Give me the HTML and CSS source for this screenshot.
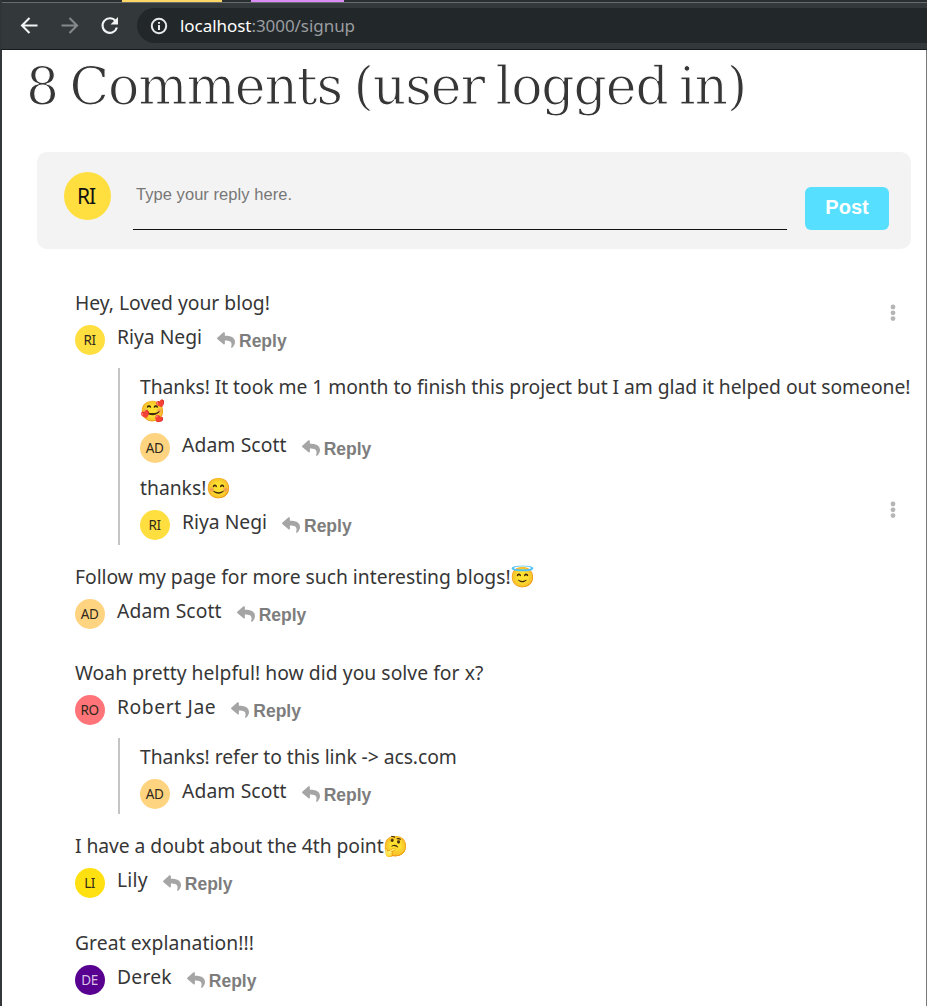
FILE: index.html
```html
<!DOCTYPE html>
<html lang="en">
<head>
<meta charset="utf-8">
<title>Comments</title>
<link rel="stylesheet" href="styles.css">
</head>
<body>
<svg width="0" height="0" class="defs">
  <symbol id="reply" viewBox="0 0 512 512"><path d="M8.3 189.8 184.3 37.9c15.4-13.4 39.7-2.5 39.7 18.1v80c160.600 1.800 288 34 288 186.300 0 61.400-39.600 122.300-83.300 154.100-13.700 9.900-33.100-2.500-28.100-18.600 45.300-145-21.500-183.500-176.600-185.700V360c0 20.700-24.300 31.500-39.700 18.200l-176-152c-11.100-9.600-11.100-26.800 0-36.400z"/></symbol>
  <symbol id="dots" viewBox="0 0 6 18"><circle cx="3" cy="3" r="2.400"/><circle cx="3" cy="8.800" r="2.400"/><circle cx="3" cy="14.600" r="2.400"/></symbol>
</svg>
<header class="browser">
  <div class="tabs"><span class="tab yellow"></span><span class="tab purple"></span></div>
  <div class="toolbar">
    <svg class="nav" viewBox="0 0 24 24"><path d="M20.500 11.500H5.500M12.500 4 5 11.500l7.500 7.500"/></svg>
    <svg class="nav dim" viewBox="0 0 24 24"><path d="M4.500 11.500h15M12.500 4l7.500 7.500-7.500 7.500"/></svg>
    <svg class="nav" viewBox="0 0 24 24"><path d="M18.600 7A7.300 7.300 0 1 0 19.900 13.500"/><path class="solid" d="M21 3v7.500h-7.500z"/></svg>
    <div class="address">
      <svg class="info" viewBox="0 0 18 18"><circle cx="9" cy="9" r="7.200"/><path d="M9 8v5M9 5v1.800"/></svg>
      <span class="url"><b>localhost</b>:3000/signup</span>
    </div>
  </div>
</header>
<main class="page">
  <h1 class="title">8 Comments (user logged in)</h1>
  <form class="composer">
    <span class="avatar large ri">RI</span>
    <div class="field">Type your reply here.</div>
    <button class="post" type="button">Post</button>
  </form>
  <section class="comments">
    <article class="comment threaded">
      <p class="text t1">Hey, Loved your blog!</p>
      <div class="meta"><span class="avatar ri">RI</span><span class="name n1">Riya Negi</span><a class="reply"><svg><use href="#reply"/></svg>Reply</a></div>
      <svg class="more"><use href="#dots"/></svg>
      <div class="replies">
        <article class="comment">
          <p class="text t2">Thanks! It took me 1 month to finish this project but I am glad it helped out someone!<br><span class="emoji">🥰</span></p>
          <div class="meta"><span class="avatar ad">AD</span><span class="name n2">Adam Scott</span><a class="reply"><svg><use href="#reply"/></svg>Reply</a></div>
        </article>
        <article class="comment">
          <p class="text t3">thanks!<span class="emoji">😊</span></p>
          <div class="meta"><span class="avatar ri">RI</span><span class="name n1">Riya Negi</span><a class="reply"><svg><use href="#reply"/></svg>Reply</a></div>
          <svg class="more low"><use href="#dots"/></svg>
        </article>
      </div>
    </article>
    <article class="comment">
      <p class="text t4">Follow my page for more such interesting blogs!<span class="emoji">😇</span></p>
      <div class="meta"><span class="avatar ad">AD</span><span class="name n2">Adam Scott</span><a class="reply"><svg><use href="#reply"/></svg>Reply</a></div>
    </article>
    <article class="comment threaded">
      <p class="text t5">Woah pretty helpful! how did you solve for x?</p>
      <div class="meta"><span class="avatar ro">RO</span><span class="name n3">Robert Jae</span><a class="reply"><svg><use href="#reply"/></svg>Reply</a></div>
      <div class="replies">
        <article class="comment">
          <p class="text t6">Thanks! refer to this link -&gt; acs.com</p>
          <div class="meta"><span class="avatar ad">AD</span><span class="name n2">Adam Scott</span><a class="reply"><svg><use href="#reply"/></svg>Reply</a></div>
        </article>
      </div>
    </article>
    <article class="comment roomy">
      <p class="text t7">I have a doubt about the 4th point<span class="emoji">🤔</span></p>
      <div class="meta"><span class="avatar li">LI</span><span class="name n4">Lily</span><a class="reply"><svg><use href="#reply"/></svg>Reply</a></div>
    </article>
    <article class="comment">
      <p class="text t8">Great explanation!!!</p>
      <div class="meta"><span class="avatar de">DE</span><span class="name n5">Derek</span><a class="reply"><svg><use href="#reply"/></svg>Reply</a></div>
    </article>
  </section>
</main>
</body>
</html>
```
FILE: styles.css
```css
* { box-sizing: border-box; }
body { margin: 0; height: 1006px; overflow: hidden; display: flex; flex-direction: column; background: #fff; color: #363636; font-family: "Noto Sans", sans-serif; }
.defs { position: absolute; }
.browser { flex: none; height: 50px; background: #33393b; border-left: 2px solid #303638; border-bottom: 1px solid #171b1d; }
.tabs { height: 3px; background: #292e31; border-bottom: 1px solid #686c6e; display: flex; padding-left: 120px; gap: 29px; }
.tab { height: 2px; }
.yellow { width: 100px; background: #fdd663; }
.purple { width: 93px; background: #d98cf5; }
.toolbar { display: flex; align-items: center; padding: 5px 0 0 15px; }
.nav { width: 24px; height: 24px; margin-right: 16px; fill: none; stroke: #f1f3f4; stroke-width: 2.100; }
.nav.dim { stroke: #85898b; }
.nav .solid { fill: #f1f3f4; stroke: none; }
.address { flex: 1; height: 35px; border-radius: 18px 0 0 18px; background: #22272a; display: flex; align-items: center; padding-left: 13px; gap: 12px; }
.info { width: 18px; height: 18px; fill: none; stroke: #e8eaed; stroke-width: 2; }
.url { font-size: 17px; line-height: 24px; color: #9a9da0; letter-spacing: -.05px; }
.url b { font-weight: 400; color: #fff; }
.page { flex: 1; min-height: 0; border-left: 2px solid #333739; border-right: 1px solid #77797a; padding: 0 15px 0 26px; }
.title { margin: 0 0 0 -2px; height: 102px; font: 400 52px/72px "DejaVu Serif", serif; letter-spacing: -1.100px; word-spacing: -4px; -webkit-text-stroke: 1.100px #fff; white-space: nowrap; }
.composer { height: 97px; margin-left: 9px; border-radius: 10px; background: #f3f3f3; display: flex; padding: 20px 22px 0 27px; }
.avatar { flex: none; width: 30px; height: 30px; border-radius: 50%; display: flex; align-items: center; justify-content: center; font-size: 13.500px; line-height: 30px; color: #30291b; letter-spacing: -.5px; padding-right: 1px; }
.avatar.large { width: 47px; height: 48px; font-size: 21px; color: #111; letter-spacing: -1px; padding-right: 3px; }
.ri { background: #ffdf40; }
.ad { background: #ffd480; }
.ro { background: #ff7479; }
.li { background: #ffe010; }
.avatar.de { background: #580090; color: #d8c2e6; }
.field { flex: 1; height: 58px; margin: 0 18px 0 22px; padding: 12px 3px 0; border-bottom: 1px solid #111; font: 16.500px/20px "Liberation Sans", sans-serif; color: #777; letter-spacing: .05px; }
.post { width: 84px; height: 43px; margin-top: 15px; padding: 0 0 3px; border: 0; border-radius: 6px; background: #57dfff; color: #fff; font: 700 20px/24px "Liberation Sans", sans-serif; }
.comments { padding: 42px 0 0 47px; }
.comment { position: relative; margin-bottom: 32px; }
.comment.threaded { margin-bottom: 20px; }
.comment.roomy { margin-bottom: 33px; }
.text { margin: 0 0 10px; font-size: 19.300px; line-height: 24px; white-space: nowrap; }
.t2 { letter-spacing: -.045px; }
.t4 { letter-spacing: -.01px; }
.t5 { letter-spacing: .045px; }
.t6, .t7 { letter-spacing: -.05px; }
.t8 { letter-spacing: .08px; }
.emoji { font-family: "Noto Color Emoji", "Noto Sans", sans-serif; font-size: 20px; line-height: 20px; letter-spacing: 0; }
.meta { display: flex; height: 30px; }
.name { margin: 0 15px 0 12px; font-size: 19.300px; line-height: 24px; white-space: nowrap; }
.n2 { letter-spacing: .12px; }
.n3 { letter-spacing: .6px; }
.n4, .n5 { letter-spacing: .22px; }
.reply { display: flex; align-items: flex-start; gap: 4px; height: 30px; padding-top: 6px; font: 700 17.500px/20px "Liberation Sans", sans-serif; color: #7d7d7d; }
.reply svg { width: 18px; height: 18px; fill: #a5a5a5; }
.more { position: absolute; right: 15px; top: 13px; width: 6px; height: 18px; fill: #b5b5b5; }
.more.low { top: 25px; }
.replies { margin: 13px 0 0 43px; padding: 7px 0 5px 20px; border-left: 2px solid #c4c4c4; }
.replies .comment { margin-bottom: 13px; }
.replies .comment:last-child { margin-bottom: 0; }
```
